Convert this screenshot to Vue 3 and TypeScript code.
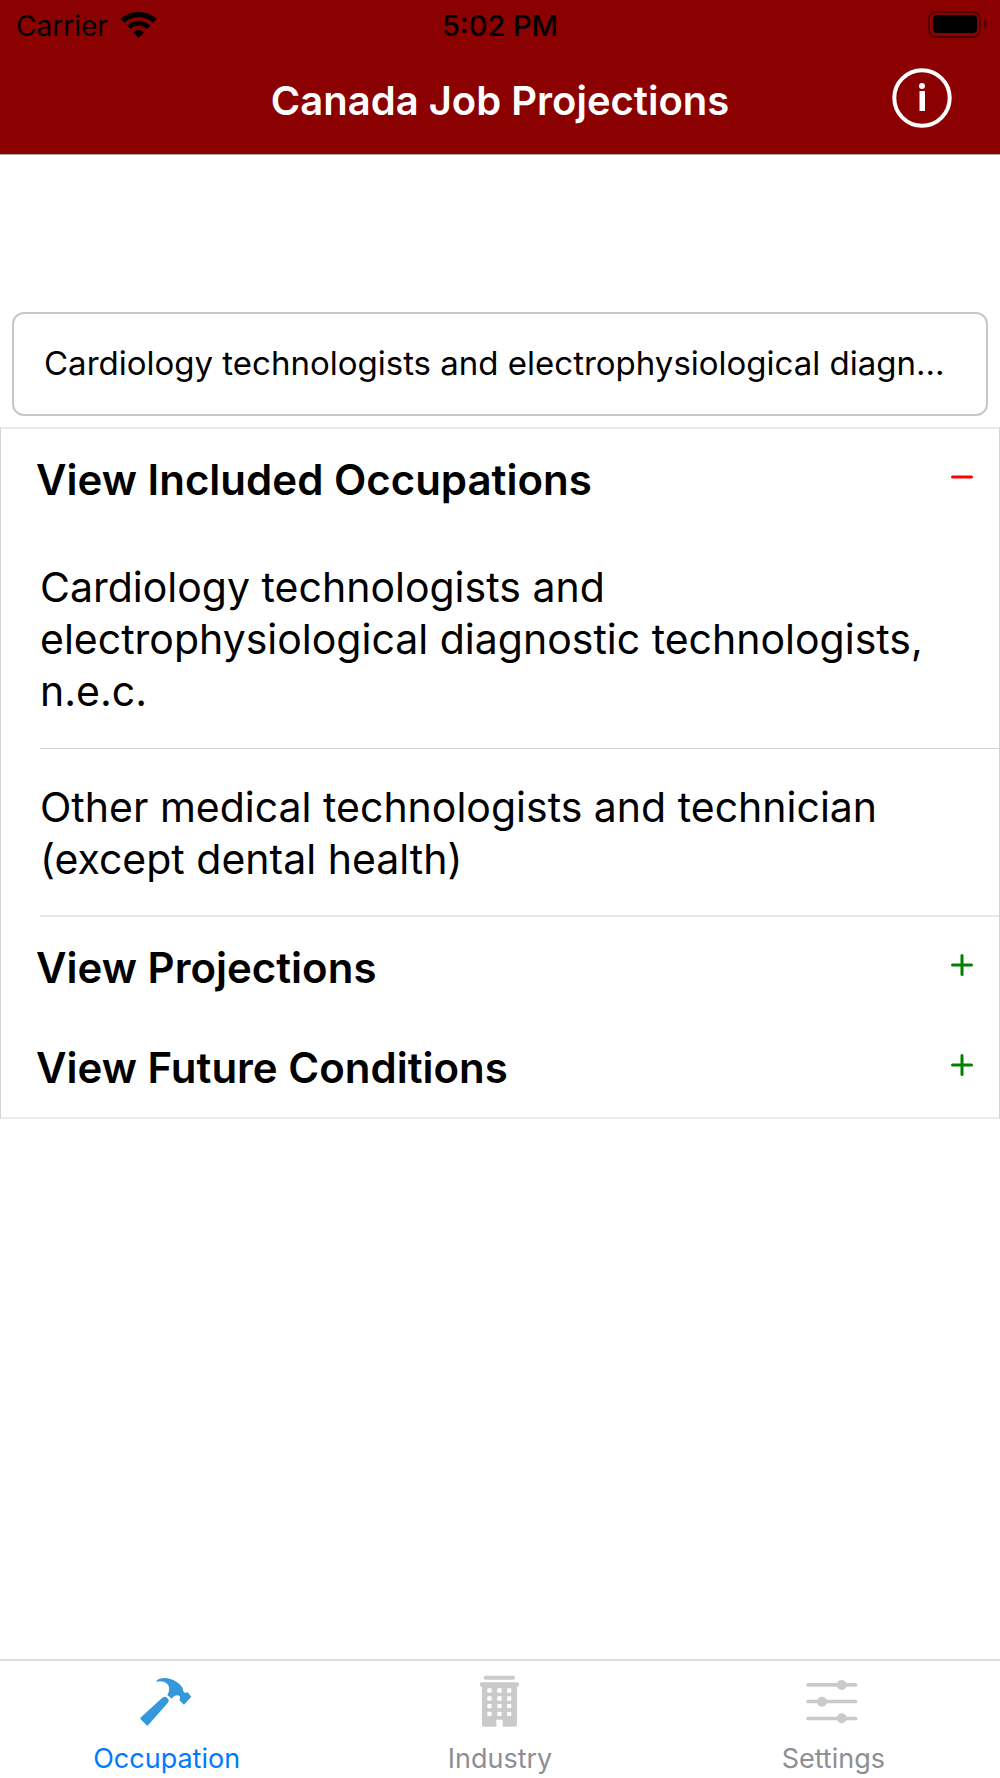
<script setup lang="ts">
import { ref } from 'vue'

interface Section {
  title: string
  open: boolean
  items: string[]
}

type TabId = 'occupation' | 'industry' | 'settings'

const query = ref('Cardiology technologists and electrophysiological diagnostic technologists')

const sections = ref<Section[]>([
  {
    title: 'View Included Occupations',
    open: true,
    items: [
      'Cardiology technologists and electrophysiological diagnostic technologists, n.e.c.',
      'Other medical technologists and technician (except dental health)',
    ],
  },
  { title: 'View Projections', open: false, items: [] },
  { title: 'View Future Conditions', open: false, items: [] },
])

const tabs: { id: TabId; label: string }[] = [
  { id: 'occupation', label: 'Occupation' },
  { id: 'industry', label: 'Industry' },
  { id: 'settings', label: 'Settings' },
]
const activeTab = ref<TabId>('occupation')

const windowColumns = [205, 235, 264]
const windowRows = [118, 142, 165, 188]
</script>

<template>
  <div class="app">
    <header class="top">
      <div class="status">
        <div class="carrier">
          <span>Carrier</span>
          <svg class="wifi" viewBox="360 30 111 84" aria-hidden="true">
            <path d="M362 54 C391 26 441 26 470 54 L459 65 C435 43 397 43 373 65 Z" />
            <path d="M381 74 C401 54 431 54 451 74 L440 84 C426 71 406 71 392 84 Z" />
            <path d="M400 94 C408 85 424 85 432 94 L416 111 Z" />
          </svg>
        </div>
        <span class="time">5:02 PM</span>
        <svg class="battery" viewBox="0 0 60 28" aria-hidden="true">
          <rect class="shell" x="1" y="1" width="51" height="25" rx="7" />
          <rect x="5" y="4" width="44" height="18" rx="4" />
          <path class="cap" d="M56 8 Q59 11 59 13 Q59 15 56 18 Z" />
        </svg>
      </div>
      <div class="title-bar">
        <h1>Canada Job Projections</h1>
        <button class="info" type="button" aria-label="About">
          <svg viewBox="0 0 60 60" aria-hidden="true">
            <circle class="ring" cx="30" cy="30" r="27.7" />
            <circle cx="30" cy="18" r="3" />
            <path d="M27.5 23 H33 V43 H27.5 Z" />
          </svg>
        </button>
      </div>
    </header>

    <main>
      <input v-model="query" class="search" type="text" aria-label="Occupation" />

      <div class="panel">
        <section v-for="section in sections" :key="section.title">
          <h2>
            <button
              class="toggle"
              type="button"
              :aria-expanded="section.open"
              @click="section.open = !section.open"
            >
              <span>{{ section.title }}</span>
              <svg class="sign" :class="{ open: section.open }" viewBox="0 0 22 22" aria-hidden="true">
                <path d="M1.5 11 H20.5" />
                <path v-if="!section.open" d="M11 1.5 V20.5" />
              </svg>
            </button>
          </h2>
          <ul v-if="section.open && section.items.length">
            <li v-for="item in section.items" :key="item">{{ item }}</li>
          </ul>
        </section>
      </div>
    </main>

    <nav class="tabs">
      <button
        v-for="tab in tabs"
        :key="tab.id"
        class="tab"
        :class="{ active: tab.id === activeTab }"
        type="button"
        @click="activeTab = tab.id"
      >
        <svg v-if="tab.id === 'occupation'" class="hammer" viewBox="182 76 156 156" aria-hidden="true">
          <path d="M228 94 C242 80 268 84 288 96 C302 105 309 115 309 125 L314 130 L322 128 L333 141 L311 165 L298 153 L299 140 C290 133 281 138 274 147 L261 136 C270 121 269 102 250 96 C242 94 235 94 228 96 Z" />
          <path d="M246 144 Q254 138 260 144 L263 147 Q268 153 262 160 L204 226 Q201 229 198 226 L181 209 Q178 206 182 203 Z" />
        </svg>
        <svg v-else-if="tab.id === 'industry'" class="glyph" viewBox="162 76 156 156" aria-hidden="true">
          <rect x="191" y="78" width="94" height="12" rx="6" />
          <path d="M186 98 H291 A6 6 0 0 1 291 111 V225 Q291 231 285 231 H248 V210 H229 V231 H192 Q186 231 186 225 V111 A6 6 0 0 1 186 98 Z" />
          <template v-for="y in windowRows" :key="y">
            <rect v-for="x in windowColumns" :key="x" class="pane" :x="x - 3" :y="y - 2" width="13" height="13" rx="3" />
          </template>
        </svg>
        <svg v-else class="glyph" viewBox="142 76 156 156" aria-hidden="true">
          <rect x="140" y="100" width="153" height="11" rx="5" />
          <circle cx="246" cy="106" r="15" />
          <rect x="140" y="150" width="153" height="11" rx="5" />
          <circle cx="187" cy="156" r="15" />
          <rect x="140" y="201" width="153" height="11" rx="5" />
          <circle cx="246" cy="206" r="15" />
        </svg>
        <span>{{ tab.label }}</span>
      </button>
    </nav>
  </div>
</template>

<style>
body {
  margin: 0;
  background: #fff;
}
</style>

<style scoped>
.app {
  display: flex;
  flex-direction: column;
  min-height: 100vh;
  color: #000;
  font-family: Inter, "Liberation Sans", sans-serif;
}

button,
input {
  margin: 0;
  font-family: inherit;
}

button {
  padding: 0;
  border: 0;
  background: none;
  cursor: pointer;
}

svg {
  display: block;
  flex: none;
  overflow: visible;
}

.top {
  background: #8b0000;
  border-bottom: 1px solid #b0a8a8;
}

.status {
  display: grid;
  grid-template-columns: 1fr auto 1fr;
  align-items: center;
  height: 52px;
  padding: 0 12px;
  font-size: 28px;
  line-height: 52px;
}

.carrier {
  display: flex;
  align-items: center;
  gap: 12px;
  padding-left: 4px;
}

.wifi {
  width: 37px;
  height: 28px;
  margin-bottom: 3px;
}

.time {
  font-size: 29px;
  font-weight: 500;
}

.battery {
  justify-self: end;
  width: 60px;
  height: 28px;
  margin-bottom: 2px;
}

.battery .shell {
  fill: none;
  stroke: #000;
  stroke-opacity: 0.4;
  stroke-width: 2;
}

.battery .cap {
  fill-opacity: 0.4;
}

.title-bar {
  display: grid;
  grid-template-columns: 1fr auto 1fr;
  height: 102px;
  padding: 0 48px;
  color: #fff;
}

h1 {
  grid-column: 2;
  margin: 0;
  font-size: 40px;
  font-weight: 600;
  line-height: 98px;
}

.info {
  justify-self: end;
  align-self: start;
  margin-top: 16px;
}

.info svg {
  width: 60px;
  height: 60px;
  fill: #fff;
}

.info .ring {
  fill: none;
  stroke: #fff;
  stroke-width: 4;
}

main {
  flex: 1;
  display: flex;
  flex-direction: column;
  gap: 11px;
  padding-top: 157px;
}

.search {
  margin: 0 12px;
  box-sizing: border-box;
  height: 104px;
  padding: 0 40px 2px 30px;
  border: 2px solid #c8c8c8;
  border-radius: 12px;
  background: #fff;
  color: #000;
  font-size: 33px;
  text-overflow: ellipsis;
}

.panel {
  border: 1px solid #d3d3d3;
  border-width: 2px 1px;
  border-top-color: #ebebeb;
  border-bottom-color: #ebebeb;
}

h2 {
  margin: 0;
}

.toggle {
  display: flex;
  align-items: center;
  justify-content: space-between;
  width: 100%;
  height: 100px;
  padding: 0 26px 0 35px;
  color: #000;
  font-size: 42px;
  font-weight: 600;
  text-align: left;
}

.sign {
  width: 22px;
  height: 22px;
  margin-bottom: 5px;
  stroke: #008000;
  stroke-width: 3;
  stroke-linecap: round;
}

.sign.open {
  stroke: #f00;
}

ul {
  margin: 0 0 0 39px;
  padding: 0;
  list-style: none;
}

li {
  padding: 32px 48px 31px 0;
  border-bottom: 1px solid #d0d0d0;
  font-size: 41px;
  line-height: 52px;
}

li:last-child {
  padding-bottom: 30px;
  border-bottom: 2px solid #e8e8e8;
}

.tabs {
  display: flex;
  border-top: 2px solid #dedede;
}

.tab {
  flex: 1;
  display: flex;
  flex-direction: column;
  align-items: center;
  gap: 15px;
  padding: 14px 0 2px;
  color: #8e8e93;
  font-size: 27px;
  line-height: 34px;
}

.tab svg {
  width: 52px;
  height: 52px;
}

.tab.active {
  color: #007aff;
}

.hammer {
  fill: #3498db;
}

.glyph {
  fill: #cacaca;
}

.pane {
  fill: #fff;
}
</style>
